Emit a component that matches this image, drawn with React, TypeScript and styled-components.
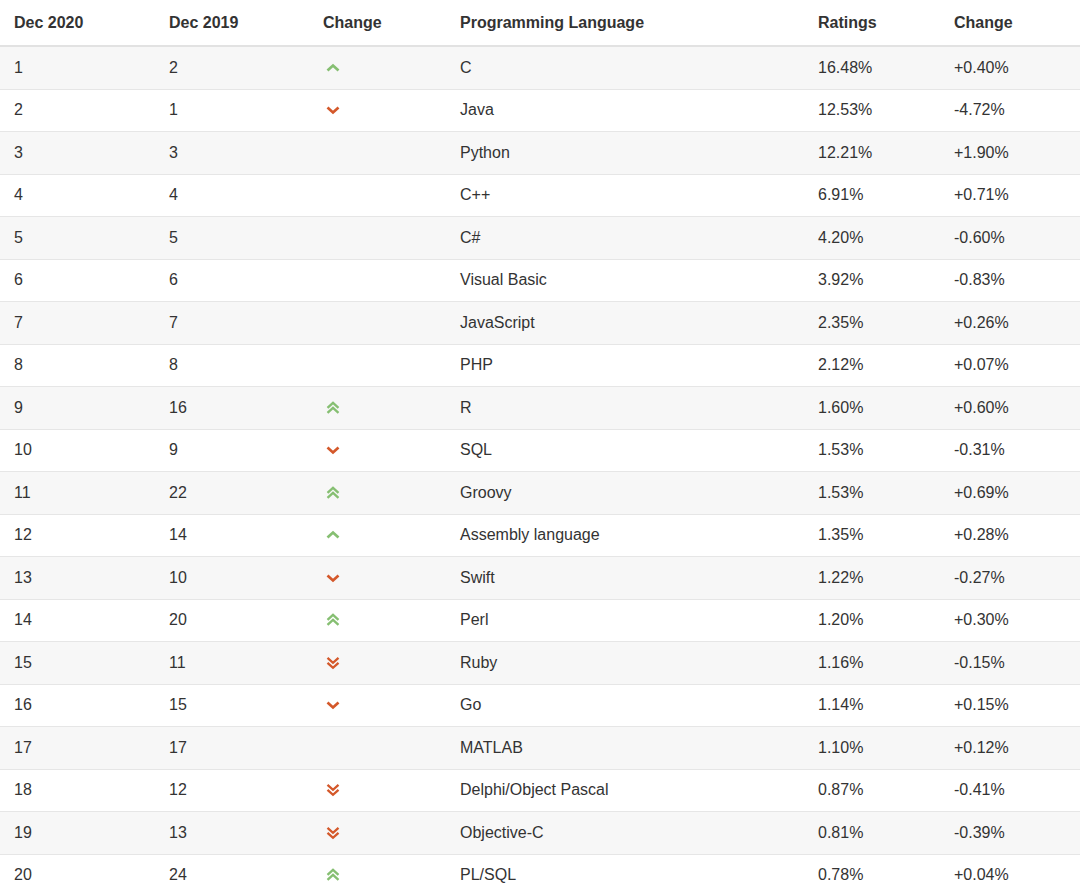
import React from 'react'
import styled, { createGlobalStyle } from 'styled-components'

const GlobalStyle = createGlobalStyle`
  html, body {
    margin: 0;
    padding: 0;
    background: #ffffff;
  }
  body {
    font-family: 'Liberation Sans', Arial, sans-serif;
    color: #333333;
  }
`

type Trend = 'up' | 'down' | 'upup' | 'downdown' | 'none'

type Row = {
    now: number
    prev: number
    trend: Trend
    lang: string
    rating: string
    change: string
}

const rows: Row[] = [
    { now: 1, prev: 2, trend: 'up', lang: 'C', rating: '16.48%', change: '+0.40%' },
    { now: 2, prev: 1, trend: 'down', lang: 'Java', rating: '12.53%', change: '-4.72%' },
    { now: 3, prev: 3, trend: 'none', lang: 'Python', rating: '12.21%', change: '+1.90%' },
    { now: 4, prev: 4, trend: 'none', lang: 'C++', rating: '6.91%', change: '+0.71%' },
    { now: 5, prev: 5, trend: 'none', lang: 'C#', rating: '4.20%', change: '-0.60%' },
    { now: 6, prev: 6, trend: 'none', lang: 'Visual Basic', rating: '3.92%', change: '-0.83%' },
    { now: 7, prev: 7, trend: 'none', lang: 'JavaScript', rating: '2.35%', change: '+0.26%' },
    { now: 8, prev: 8, trend: 'none', lang: 'PHP', rating: '2.12%', change: '+0.07%' },
    { now: 9, prev: 16, trend: 'upup', lang: 'R', rating: '1.60%', change: '+0.60%' },
    { now: 10, prev: 9, trend: 'down', lang: 'SQL', rating: '1.53%', change: '-0.31%' },
    { now: 11, prev: 22, trend: 'upup', lang: 'Groovy', rating: '1.53%', change: '+0.69%' },
    { now: 12, prev: 14, trend: 'up', lang: 'Assembly language', rating: '1.35%', change: '+0.28%' },
    { now: 13, prev: 10, trend: 'down', lang: 'Swift', rating: '1.22%', change: '-0.27%' },
    { now: 14, prev: 20, trend: 'upup', lang: 'Perl', rating: '1.20%', change: '+0.30%' },
    { now: 15, prev: 11, trend: 'downdown', lang: 'Ruby', rating: '1.16%', change: '-0.15%' },
    { now: 16, prev: 15, trend: 'down', lang: 'Go', rating: '1.14%', change: '+0.15%' },
    { now: 17, prev: 17, trend: 'none', lang: 'MATLAB', rating: '1.10%', change: '+0.12%' },
    { now: 18, prev: 12, trend: 'downdown', lang: 'Delphi/Object Pascal', rating: '0.87%', change: '-0.41%' },
    { now: 19, prev: 13, trend: 'downdown', lang: 'Objective-C', rating: '0.81%', change: '-0.39%' },
    { now: 20, prev: 24, trend: 'upup', lang: 'PL/SQL', rating: '0.78%', change: '+0.04%' },
]

const GREEN = '#86bf72'
const RED = '#d4582a'

function TrendIcon({ trend }: { trend: Trend }) {
    if (trend === 'none') return null
    const up = trend.startsWith('up')
    const color = up ? GREEN : RED
    const double = trend === 'upup' || trend === 'downdown'
    const chevron = (y: number) =>
        up ? `1.5,${y + 5} 7,${y} 12.5,${y + 5}` : `1.5,${y} 7,${y + 5} 12.5,${y}`
    return (
        <svg width="14" height="14" viewBox="0 0 14 14">
            {double ? (
                <>
                    <polyline points={chevron(1.8)} fill="none" stroke={color} strokeWidth="2.3" />
                    <polyline points={chevron(6.8)} fill="none" stroke={color} strokeWidth="2.3" />
                </>
            ) : (
                <polyline points={chevron(4.5)} fill="none" stroke={color} strokeWidth="2.7" />
            )}
        </svg>
    )
}

const Table = styled.table`
  width: 1080px;
  border-collapse: collapse;
  table-layout: fixed;
  font-size: 16px;
`

const HeadCell = styled.th`
  height: 45px;
  padding: 0 0 0 14px;
  text-align: left;
  font-weight: bold;
  color: #333333;
  border-bottom: 2px solid #e2e2e2;
  vertical-align: middle;
`

const BodyRow = styled.tr<{ $striped: boolean }>`
  background: ${({ $striped }) => ($striped ? '#f7f7f7' : '#ffffff')};
  border-bottom: 1px solid #e6e6e6;
`

const Cell = styled.td`
  height: 41.5px;
  padding: 0 0 0 14px;
  color: #333333;
  vertical-align: middle;
  line-height: 1;
`

const IconCell = styled(Cell)`
  padding-left: 17px;
  svg {
    display: block;
  }
`

const widths = [155, 154, 137, 358, 136, 140]

export default function App() {
    return (
        <>
            <GlobalStyle />
            <Table>
                <colgroup>
                    {widths.map((w, i) => (
                        <col key={i} style={{ width: w }} />
                    ))}
                </colgroup>
                <thead>
                    <tr>
                        <HeadCell>Dec 2020</HeadCell>
                        <HeadCell>Dec 2019</HeadCell>
                        <HeadCell>Change</HeadCell>
                        <HeadCell>Programming Language</HeadCell>
                        <HeadCell>Ratings</HeadCell>
                        <HeadCell>Change</HeadCell>
                    </tr>
                </thead>
                <tbody>
                    {rows.map((r, i) => (
                        <BodyRow key={r.now} $striped={i % 2 === 0}>
                            <Cell>{r.now}</Cell>
                            <Cell>{r.prev}</Cell>
                            <IconCell>
                                <TrendIcon trend={r.trend} />
                            </IconCell>
                            <Cell>{r.lang}</Cell>
                            <Cell>{r.rating}</Cell>
                            <Cell>{r.change}</Cell>
                        </BodyRow>
                    ))}
                </tbody>
            </Table>
        </>
    )
}
